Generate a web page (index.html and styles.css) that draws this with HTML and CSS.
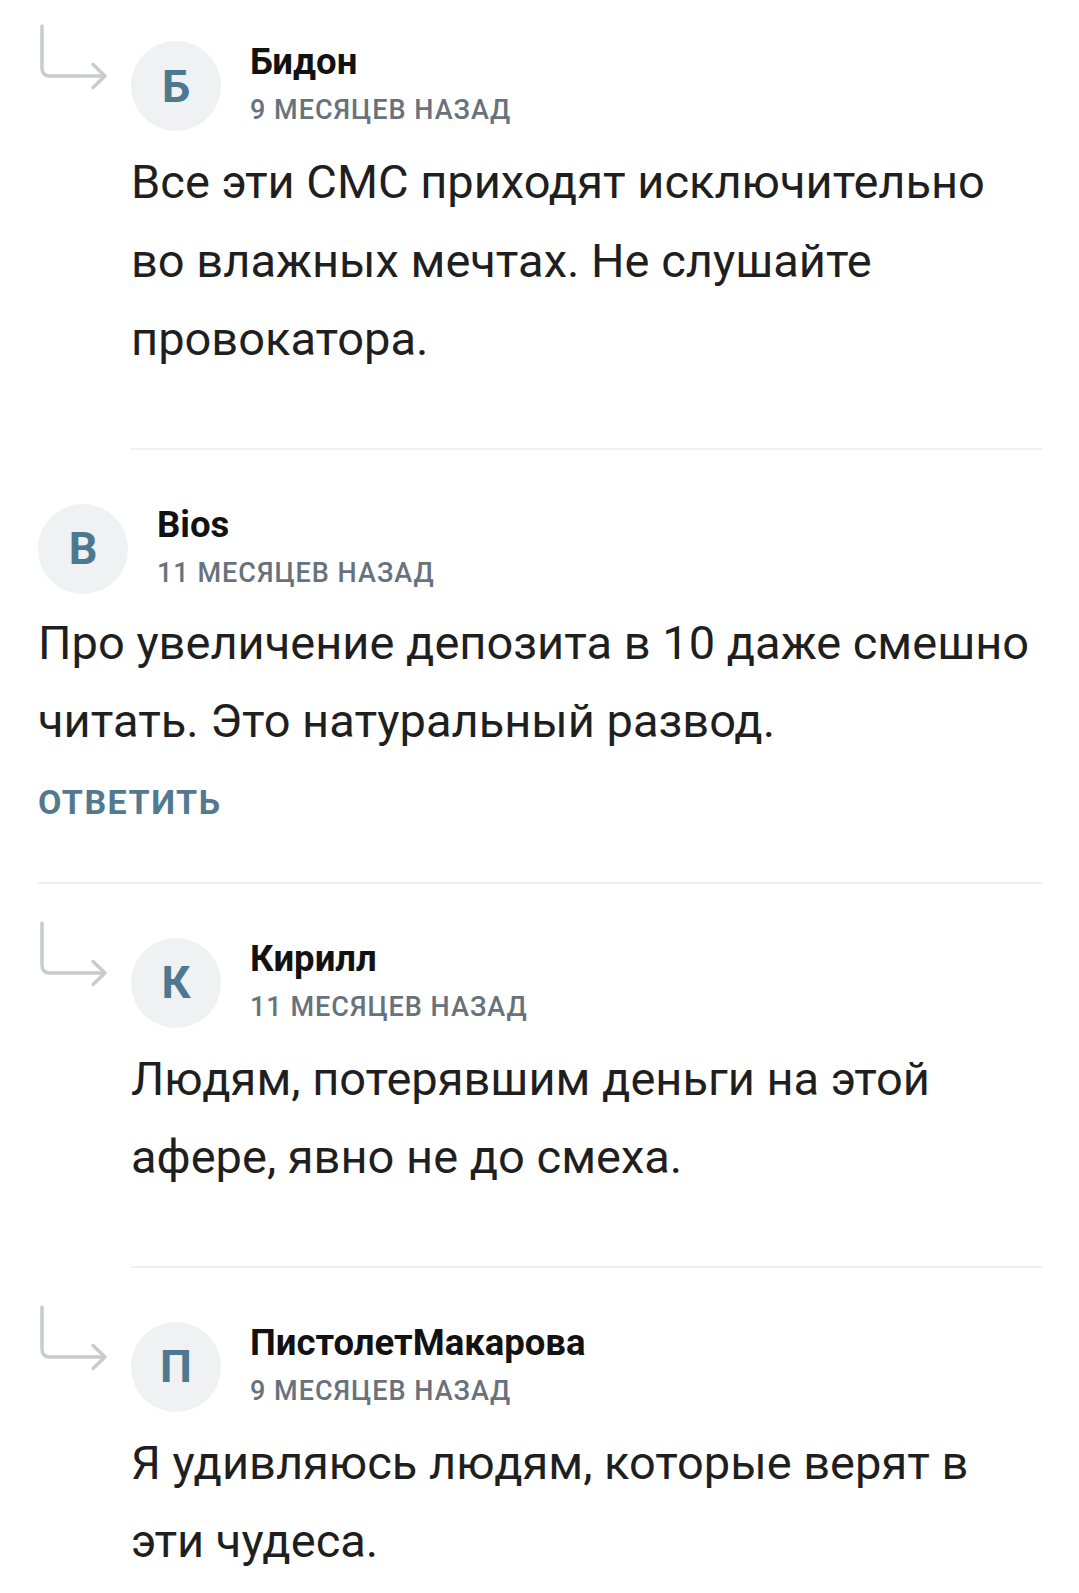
FILE: index.html
```html
<!DOCTYPE html>
<html lang="ru">
<head>
    <meta charset="UTF-8">
    <title>Комментарии</title>
    <link rel="stylesheet" href="styles.css">
</head>
<body>
    <div class="thread">
        <div class="comment-row">
            <div class="reply-mark">
                <svg width="72" height="72" viewBox="0 0 72 72"><path d="M4 6 V48 Q4 56 12 56 H67 M55 44.5 L67 56 L55 67.5" /></svg>
            </div>
            <div class="comment">
                <div class="comment-head">
                    <div class="avatar">Б</div>
                    <div class="meta">
                        <div class="author">Бидон</div>
                        <div class="date">9 месяцев назад</div>
                    </div>
                </div>
                <p class="comment-text">Все эти СМС приходят исключительно во влажных мечтах. Не слушайте провокатора.</p>
            </div>
        </div>

        <div class="comment-row">
            <div class="comment">
                <div class="comment-head">
                    <div class="avatar">B</div>
                    <div class="meta">
                        <div class="author">Bios</div>
                        <div class="date">11 месяцев назад</div>
                    </div>
                </div>
                <p class="comment-text">Про увеличение депозита в 10 даже смешно читать. Это натуральный развод.</p>
                <a class="reply-link" href="#">Ответить</a>
            </div>
        </div>

        <div class="comment-row">
            <div class="reply-mark">
                <svg width="72" height="72" viewBox="0 0 72 72"><path d="M4 6 V48 Q4 56 12 56 H67 M55 44.5 L67 56 L55 67.5" /></svg>
            </div>
            <div class="comment">
                <div class="comment-head">
                    <div class="avatar">К</div>
                    <div class="meta">
                        <div class="author">Кирилл</div>
                        <div class="date">11 месяцев назад</div>
                    </div>
                </div>
                <p class="comment-text">Людям, потерявшим деньги на этой афере, явно не до смеха.</p>
            </div>
        </div>

        <div class="comment-row">
            <div class="reply-mark">
                <svg width="72" height="72" viewBox="0 0 72 72"><path d="M4 6 V48 Q4 56 12 56 H67 M55 44.5 L67 56 L55 67.5" /></svg>
            </div>
            <div class="comment">
                <div class="comment-head">
                    <div class="avatar">П</div>
                    <div class="meta">
                        <div class="author">ПистолетМакарова</div>
                        <div class="date">9 месяцев назад</div>
                    </div>
                </div>
                <p class="comment-text">Я удивляюсь людям, которые верят в эти чудеса.</p>
            </div>
        </div>
    </div>
</body>
</html>
```

FILE: styles.css
```css
body {
    margin: 0;
    background-color: #fff;
    font-family: Roboto, 'Noto Sans', sans-serif;
    color: #1f1f1f;
}
.thread {
    padding: 0 37px 0 38px;
}
.comment-row {
    display: flex;
}
.comment-row:first-child {
    margin-top: -13px;
}
.reply-mark {
    width: 93px;
    flex-shrink: 0;
    padding-top: 33px;
}
.reply-mark svg {
    display: block;
}
.reply-mark path {
    fill: none;
    stroke: #c8cccf;
    stroke-width: 3.5;
    stroke-linecap: round;
    stroke-linejoin: round;
}
.comment {
    flex: 1;
    padding: 50px 0 69px;
    border-bottom: 2px solid #eef0f2;
}
.comment-head {
    display: flex;
    align-items: center;
    gap: 29px;
}
.avatar {
    width: 90px;
    height: 90px;
    border-radius: 50%;
    background-color: #eff1f3;
    color: #4d7892;
    font-size: 45px;
    font-weight: 700;
    display: flex;
    align-items: center;
    justify-content: center;
    flex-shrink: 0;
}
.meta {
    display: flex;
    flex-direction: column;
}
.author {
    font-size: 36.5px;
    font-weight: 700;
    line-height: 49px;
    color: #121212;
}
.date {
    font-size: 27px;
    font-weight: 500;
    line-height: 49px;
    letter-spacing: 1px;
    text-transform: uppercase;
    color: #67727c;
}
.comment-text {
    margin: 8px 0 0;
    font-size: 47px;
    line-height: 78.5px;
}
.comment-row:nth-child(2) .comment-text {
    margin-top: 6px;
}
.reply-link {
    display: block;
    margin-top: 21px;
    font-size: 34px;
    font-weight: 700;
    line-height: 40px;
    letter-spacing: 1.5px;
    text-transform: uppercase;
    text-decoration: none;
    color: #52798f;
}
.comment-row:has(.reply-link) .comment {
    padding-bottom: 60px;
}
```
